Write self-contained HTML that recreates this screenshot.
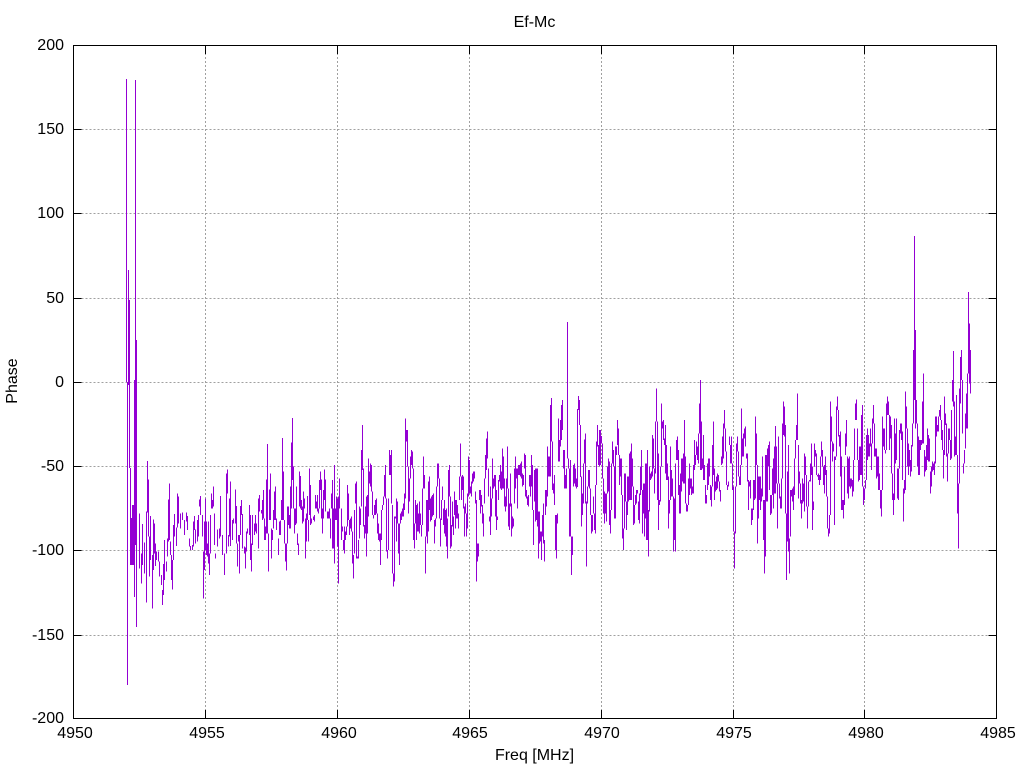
<!DOCTYPE html>
<html>
<head>
<meta charset="utf-8">
<title>Ef-Mc</title>
<style>
html,body{margin:0;padding:0;background:#fff}
svg{display:block}
text{font-family:"Liberation Sans",sans-serif;font-size:16px;fill:#000}
.g{stroke:#a0a0a0;stroke-width:1;stroke-dasharray:2 2;fill:none}
.b{stroke:#000;stroke-width:1;fill:none}
.t{stroke:#9400d3;fill:none}
</style>
</head>
<body>
<svg width="1024" height="768" viewBox="0 0 1024 768" xmlns="http://www.w3.org/2000/svg">
<rect width="1024" height="768" fill="#fff"/>
<g shape-rendering="crispEdges">
<path class="g" d="M73.5 129.5H996M73.5 213.5H996M73.5 298.5H996M73.5 382.5H996M73.5 466.5H996M73.5 550.5H996M73.5 635.5H996"/>
<path class="g" d="M205.5 45V718M337.5 45V718M469.5 45V718M601.5 45V718M733.5 45V718M864.5 45V718"/>
<g class="t" stroke-width="1">
<path d="M126.5 79V382M127.5 382V685M128.5 270V385M129.5 300V468M130.5 468V565M131.5 518V565M132.5 505V565M133.5 505V565M134.5 380V597M135.5 80V545M136.5 340V627M476.5 500V548M577.5 409V487M578.5 396V410M579.5 400V425M580.5 425V477"/>
</g>
<g class="t" stroke-width="3" transform="translate(110.5 440) scale(.33333)">
<path d="M87 220V385M93 340V430M96 252V375M102 307V400M108 215V488M111 63V218M114 118V290M117 290V410M120 228V360M126 345V505M129 238V390M132 250V340M135 310V378M138 335V360M144 335V365M147 365V410M153 405V435M156 450V495M159 372V465M162 300V420M168 365V395M171 295V350M174 178V305M177 130V300M180 305V345M183 345V420M186 360V448M189 255V360M192 222V290M198 262V318M201 160V262M204 170V250M210 220V265M216 218V240M222 240V285M228 218V245M231 228V270M237 295V320M240 318V330M246 315V330M249 245V320M252 228V270M255 268V310M261 240V305M264 225V290M267 178V200M270 168V225M276 225V290M279 335V475M282 245V390M285 175V330M288 245V345M291 310V350M294 245V370M297 340V405M300 225V340M303 160V205M306 180V205M309 140V200M312 220V315M315 340V355M321 268V320M327 265V295M330 168V290M336 285V345M342 340V405M348 100V340M351 88V160M354 285V320M357 175V290M360 125V318M366 240V300M369 235V250M375 148V250M378 198V310M381 310V380M384 285V305M387 285V400M390 198V285M393 180V225M396 222V325M402 320V340M405 322V385M408 275V335M411 265V280M417 195V285M420 225V360M423 310V395M426 225V315M432 250V285M435 225V275M438 250V280M444 175V325M447 165V215M453 210V220M456 180V240M459 150V235M462 235V300M465 260V300M468 118V280M471 12V280M474 280V395M477 148V240M480 100V240M483 265V355M486 270V300M489 210V265M492 155V240M495 140V240M498 235V270M504 295V345M507 245V285M510 242V285M513 180V240M516 -6V240M519 95V240M522 240V310M525 310V365M528 310V392M531 200V310M534 200V255M537 225V265M540 140V265M543 8V205M546 -66V120M549 80V205M552 205V280M555 205V255M558 140V250M561 280V315M564 310V345M567 95V200M570 108V205M573 180V210M576 200V250M579 155V245M582 175V205M585 235V355M588 220V305M591 168V240M594 240V305M597 85V225M600 135V255M603 235V250M609 230V240M612 225V245M615 165V205M618 185V205M621 165V215M624 205V220M627 120V205M630 95V150M633 118V235M636 205V280M639 150V235M642 88V180M645 118V215M651 215V235M654 215V235M657 205V235M660 235V295M663 160V205M666 120V325M669 205V325M672 75V370M675 205V240M678 170V240M681 175V320M684 170V430M687 115V205"/>
</g>
<g class="t" stroke-width="3" transform="translate(340.5 400) scale(.33333)">
<path d="M3 325V420M6 380V395M9 420V450M12 380V460M15 395V420M18 380V405M21 255V380M24 280V360M27 360V405M30 355V385M33 350V395M36 395V490M39 465V535M42 330V460M45 250V310M48 245V475M51 470V475M54 420V475M57 320V415M60 325V375M63 150V320M66 75V210M69 205V380M72 375V415M75 320V400M78 290V470M81 285V400M84 175V350M87 215V250M90 190V260M93 195V275M96 275V345M99 345V355M102 315V345M105 300V345M108 295V340M111 340V400M114 370V420M117 400V425M120 400V495M123 330V420M126 315V330M129 290V315M132 225V290M135 195V295M138 295V455M141 450V475M144 295V450M147 150V225M150 165V225M153 150V310M156 315V520M159 520V560M162 350V545M165 350V355M168 295V425M171 305V370M174 370V460M177 370V495M180 340V370M183 335V360M186 325V350M189 310V350M192 280V330M195 55V295M198 90V125M201 90V200M204 200V340M207 235V305M210 170V235M213 150V195M216 155V205M219 205V420M222 370V445M225 300V370M228 315V420M231 310V395M234 340V395M237 305V400M240 340V375M243 375V410M246 265V375M249 170V265M252 225V265M255 410V520M258 300V410M261 300V430M264 245V395M267 230V330M270 295V365M273 290V360M276 285V350M279 280V345M282 360V430M285 355V380M288 260V355M291 190V260M294 190V235M297 235V355M300 355V440M303 300V360M306 260V300M309 325V375M312 300V400M315 330V410M318 325V440M321 355V475M324 210V350M327 195V290M330 290V445M333 375V440M336 305V380M339 350V405M342 275V345M345 300V385M348 300V355M351 315V355M354 340V385M357 230V300M360 130V230M363 230V300M366 225V270M369 230V325M372 320V410M375 310V340M378 340V410M381 280V385M384 170V290M387 180V280M390 260V280M393 245V290M396 220V250M399 215V245M402 215V235M405 275V310M408 440V545M411 430V485M414 430V470M417 270V300M420 270V340M423 285V320M426 315V370M429 340V410M432 235V310M435 165V235M438 115V210M441 95V175M444 205V290M447 350V365M450 260V405M453 295V350M456 175V295M459 235V265M462 225V260M465 225V350M468 270V390M471 350V360M474 240V300M477 225V245M480 195V265M483 215V270M486 145V265M489 170V265M492 235V320M495 290V335M498 235V320M501 140V265M504 265V380M507 310V390M510 220V320M513 310V410M516 350V385M519 355V380M522 205V310M525 170V265M528 205V235M531 205V325M534 195V225M537 195V225M540 190V230M543 185V235M546 220V260M549 225V255M552 160V205M555 165V290M558 270V295M561 290V315M564 285V320M567 225V260M570 225V290M573 165V260M576 195V330M579 330V435M582 210V305M585 205V365M588 205V360M591 205V380M594 335V475M597 335V430M600 395V425M603 395V480M606 345V410M609 310V430M612 420V485M615 270V345M618 270V320M621 140V290M624 170V230M627 170V230M630 15V230M633 -6V125M636 125V270M639 250V280M642 225V315M645 345V450M648 345V475M651 340V370M654 55V185M657 120V185M660 60V140M663 15V120M666 0V90M669 150V205M672 150V265M675 225V265M678 205V265M681 -234V175M684 175V205M687 205V410M690 180V410M693 410V525M696 410V465M699 195V260M702 190V250M705 205V260M708 235V265"/>
</g>
<g class="t" stroke-width="3" transform="translate(560.1667 370) scale(.33333)">
<path d="M64 320V470M67 370V435M70 280V400M73 208V280M76 190V400M79 395V590M82 350V400M85 300V350M88 300V355M91 355V435M94 435V490M97 435V485M100 380V430M103 430V480M106 345V490M109 215V345M112 165V230M115 225V285M118 180V290M121 180V285M124 198V220M127 220V325M130 325V430M133 365V460M136 370V430M139 370V455M142 290V370M145 265V365M148 275V465M151 420V490M154 280V420M157 215V280M160 240V290M163 290V445M166 230V445M169 230V255M172 150V225M175 175V255M178 255V345M181 265V320M184 265V375M187 375V505M190 475V540M193 310V475M196 310V395M199 395V480M202 320V435M205 320V395M208 250V390M211 245V390M214 220V390M217 265V350M220 350V465M223 405V460M226 375V405M229 360V400M232 360V370M235 395V450M238 370V460M241 290V375M244 240V360M247 360V490M250 340V430M253 340V500M256 280V445M259 280V510M262 240V510M265 420V560M268 290V425M271 310V330M274 305V325M277 195V320M280 205V295M283 295V370M286 155V310M289 55V155M292 155V390M295 250V480M298 390V405M301 290V395M304 100V290M307 155V175M310 150V210M313 205V225M316 165V310M319 225V330M322 280V330M325 320V475M328 390V430M331 230V390M334 300V380M337 325V380M340 380V545M343 385V510M346 280V545M349 210V270M352 200V270M355 240V375M358 345V430M361 310V430M364 265V365M367 265V335M370 250V340M373 150V340M376 260V400M379 400V425M382 405V425M385 325V405M388 280V375M391 325V355M394 325V375M397 350V370M400 285V370M403 210V300M406 255V285M409 215V255M412 230V270M415 190V280M418 100V190M421 30V300M424 155V300M427 265V295M430 195V330M433 285V330M436 345V400M439 375V400M442 280V360M445 265V345M448 265V320M451 345V390M454 350V410M457 225V350M460 155V315M463 295V390M466 335V365M469 320V360M472 310V355M475 315V335M478 335V365M481 360V395M484 260V285M487 200V280M490 160V265M493 120V175M496 175V245M499 245V345M502 345V360M505 335V350M508 200V225M511 225V280M514 200V280M517 280V360M520 350V485M523 485V595M526 350V490M529 220V350M532 200V245M535 245V320M538 320V345M541 285V345M544 115V285M547 205V260M550 190V260M553 175V205M556 170V230M559 250V265M562 250V335M565 330V420M568 335V350M571 330V385M574 415V465M577 415V450M580 330V420M583 330V390M586 140V385M589 190V285M592 285V520M595 320V445M598 320V390M601 320V420M604 355V395M607 260V380M610 390V510M613 390V610M616 255V560M619 255V395M622 235V395M625 225V290M628 215V360M631 375V435M634 375V430M637 295V375"/>
</g>
<g class="t" stroke-width="3" transform="translate(770.5 360) scale(.33333)">
<path d="M6 325V405M9 295V445M12 260V400M15 198V400M18 260V370M21 370V505M24 230V370M27 370V415M30 410V445M33 355V445M36 190V355M39 125V225M42 140V230M45 195V460M48 460V660M51 335V545M54 255V575M57 535V640M60 390V530M63 390V410M66 385V425M69 380V450M72 295V405M75 240V295M78 195V240M81 100V240M84 255V415M87 335V370M90 370V430M93 420V475M96 355V430M99 370V425M102 280V455M105 290V345M108 345V440M111 440V505M114 365V440M117 360V365M120 310V365M123 250V345M126 320V510M129 425V450M132 250V320M135 270V290M138 280V345M141 345V350"/>
</g>
<g class="t" stroke-width="3" transform="translate(770.1667 360) scale(.33333)">
<path d="M145 340V360M148 345V375M151 290V360M154 245V290M157 270V320M160 320V375M163 315V400M166 290V345M169 330V410M172 410V505M175 505V530M178 465V520M181 125V465M184 170V245M187 245V305M190 250V275M193 290V495M196 290V300M199 140V290M202 110V150M205 150V230M208 225V260M211 215V350M214 290V450M217 420V450M220 420V475M223 320V435M226 220V285M229 180V260M232 290V400M235 295V415M238 290V380M241 355V385M244 355V380M247 360V410M250 300V395M253 205V300M256 130V180M259 118V180M262 205V300M265 300V365M268 260V360M271 260V345M274 165V345M277 135V380M280 380V435M283 385V420M286 360V385M289 225V360M292 205V300M295 225V290M298 250V290M301 205V260M304 250V330M307 175V250M310 135V190M313 190V290M316 265V290M319 265V355M322 290V350M325 290V390M328 340V390M331 390V445M334 390V470M337 170V390M340 205V260M343 205V270M346 270V280M349 130V270M352 110V165M355 125V165M358 165V270M361 170V235M364 195V340M367 340V420M370 400V465M373 175V420M376 220V310M379 175V300M382 325V415M385 325V420M388 210V325M391 190V220M394 190V240M397 215V360M400 385V485M403 360V400M406 95V390M409 140V205M412 205V320M415 250V345M418 270V320M421 300V350M424 255V335M427 190V260M430 -30V190M433 -372V120M436 -90V205M439 120V190M442 190V320M445 230V345M448 240V345M451 240V270M454 240V255M457 125V250M460 40V250M463 270V350M466 290V335M469 255V330M472 205V300M475 225V305M478 235V305M481 335V400M484 320V380M487 305V335M490 310V330M493 305V345M496 170V310M499 170V230M502 195V215M505 170V215M508 150V170M511 135V180M514 180V240M517 210V270M520 270V355M523 110V285M526 160V195M529 190V290M532 280V365M535 205V280M538 205V240M541 240V300M544 150V295M547 60V125M550 -27V140M553 125V290M556 230V285M559 105V285M562 285V460M565 370V565M568 85V370M571 -9V130M574 -30V60M577 60V220M580 310V340M583 270V310M586 160V265M589 100V205M592 40V205M595 -204V40M598 -110V70M601 -30V100"/>
</g>
<path class="b" d="M73.5 45.5H996.5V718.5H73.5Z"/>
<path class="b" d="M73.5 129.5h8M73.5 213.5h8M73.5 298.5h8M73.5 382.5h8M73.5 466.5h8M73.5 550.5h8M73.5 635.5h8M996.5 129.5h-8M996.5 213.5h-8M996.5 298.5h-8M996.5 382.5h-8M996.5 466.5h-8M996.5 550.5h-8M996.5 635.5h-8"/>
<path class="b" d="M205.5 718v-8M337.5 718v-8M469.5 718v-8M601.5 718v-8M733.5 718v-8M864.5 718v-8M205.5 46v8M337.5 46v8M469.5 46v8M601.5 46v8M733.5 46v8M864.5 46v8"/>
</g>
<g text-anchor="end">
<text x="64" y="50">200</text>
<text x="64" y="134">150</text>
<text x="64" y="218">100</text>
<text x="64" y="303">50</text>
<text x="64" y="387">0</text>
<text x="64" y="471">-50</text>
<text x="64" y="555">-100</text>
<text x="64" y="640">-150</text>
<text x="64" y="723">-200</text>
</g>
<g text-anchor="middle">
<text x="75" y="738">4950</text>
<text x="207" y="738">4955</text>
<text x="339" y="738">4960</text>
<text x="470" y="738">4965</text>
<text x="602" y="738">4970</text>
<text x="734" y="738">4975</text>
<text x="866" y="738">4980</text>
<text x="998" y="738">4985</text>
<text x="534.5" y="27">Ef-Mc</text>
<text x="534.5" y="760">Freq [MHz]</text>
<text transform="translate(17 381) rotate(-90)">Phase</text>
</g>
</svg>
</body>
</html>
